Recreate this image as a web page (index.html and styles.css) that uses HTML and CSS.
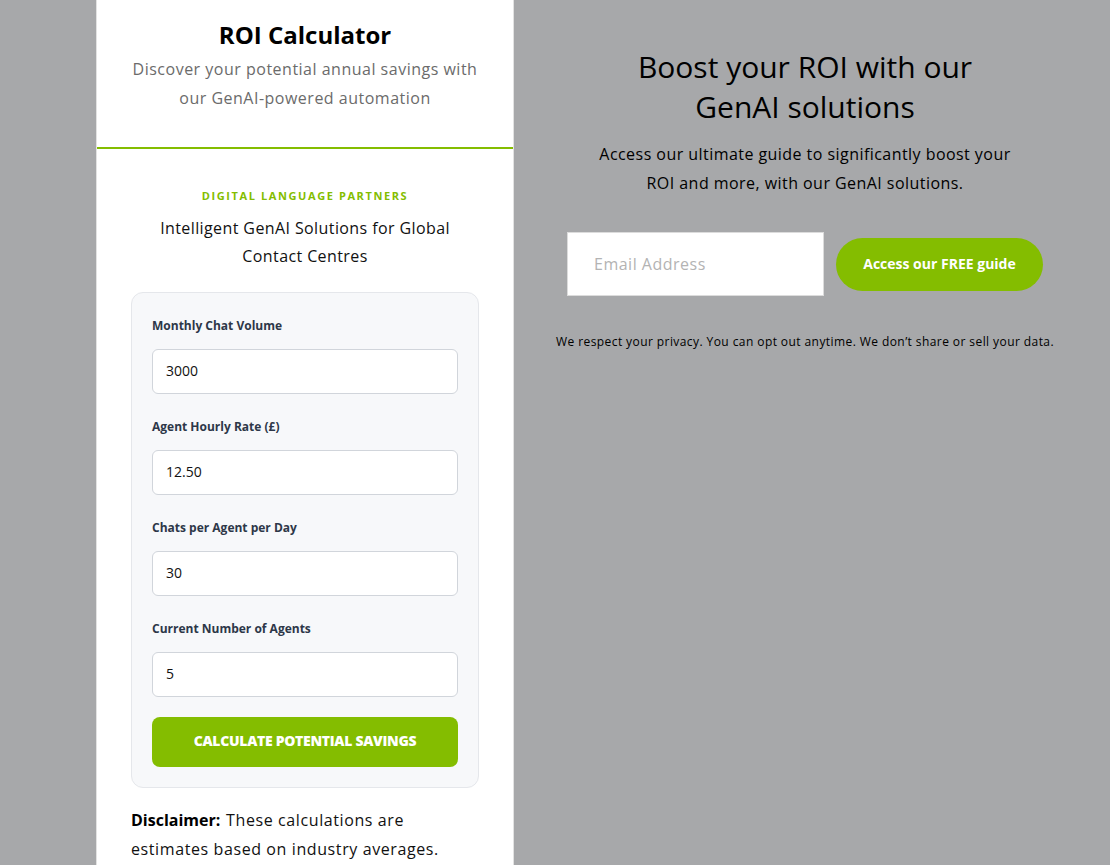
FILE: index.html
```html
<!DOCTYPE html>
<html lang="en">
<head>
<meta charset="utf-8">
<title>ROI Calculator</title>
<link rel="stylesheet" href="styles.css">
</head>
<body>
<div class="page">
  <section class="panel">
    <header class="panel-head">
      <h1 class="title">ROI Calculator</h1>
      <p class="subtitle">Discover your potential annual savings with our GenAI-powered automation</p>
    </header>
    <div class="panel-body">
      <div class="brand">DIGITAL LANGUAGE PARTNERS</div>
      <p class="tagline">Intelligent GenAI Solutions for Global Contact Centres</p>
      <form class="card">
        <div class="field">
          <label class="label">Monthly Chat Volume</label>
          <input class="input" type="text" value="3000">
        </div>
        <div class="field">
          <label class="label">Agent Hourly Rate (£)</label>
          <input class="input" type="text" value="12.50">
        </div>
        <div class="field">
          <label class="label">Chats per Agent per Day</label>
          <input class="input" type="text" value="30">
        </div>
        <div class="field last">
          <label class="label">Current Number of Agents</label>
          <input class="input" type="text" value="5">
        </div>
        <button class="calc-btn" type="button">CALCULATE POTENTIAL SAVINGS</button>
      </form>
      <p class="disclaimer"><strong class="disc-label">Disclaimer:</strong> These calculations are estimates based on industry averages.</p>
    </div>
  </section>
  <section class="promo">
    <h2 class="promo-title">Boost your ROI with our GenAI solutions</h2>
    <p class="promo-text">Access our ultimate guide to significantly boost your ROI and more, with our GenAI solutions.</p>
    <div class="signup">
      <input class="email" type="text" placeholder="Email Address">
      <button class="guide-btn" type="button">Access our FREE guide</button>
    </div>
    <p class="privacy">We respect your privacy. You can opt out anytime. We don’t share or sell your data.</p>
  </section>
</div>
</body>
</html>
```

FILE: styles.css
```css
* { box-sizing: border-box; }
html, body { margin: 0; padding: 0; }
body {
  background: #a7a8aa;
  font-family: "Open Sans", "DejaVu Sans", sans-serif;
  color: #000;
  height: 865px;
  overflow: hidden;
}
.page {
  display: flex;
  align-items: flex-start;
  padding-left: 96px;
}
.panel {
  width: 418px;
  background: #fff;
  border-left: 1px solid #e2e2e2;
  border-right: 1px solid #e2e2e2;
  min-height: 865px;
  flex-shrink: 0;
}
.panel-head {
  padding: 19px 28px 34px;
  text-align: center;
  border-bottom: 2px solid #84bd00;
}
.title {
  margin: 0 0 4px;
  font-size: 24px;
  line-height: 32px;
  font-weight: 700;
}
.subtitle {
  margin: 0;
  font-size: 16px;
  line-height: 29px;
  letter-spacing: 0.5px;
  color: #6b6b6b;
}
.panel-body {
  padding: 39px 34px 0;
}
.brand {
  text-align: center;
  color: #84bd00;
  font-size: 11px;
  line-height: 16px;
  font-weight: 700;
  letter-spacing: 1.6px;
}
.tagline {
  margin: 10px 0 22px;
  padding: 0 12px;
  text-align: center;
  font-size: 16px;
  line-height: 28px;
  letter-spacing: 0.4px;
  color: #111;
}
.card {
  background: #f7f8fa;
  border: 1px solid #e5e7eb;
  border-radius: 12px;
  padding: 24px 20px 20px;
  margin: 0;
}
.field {
  display: flex;
  flex-direction: column;
  margin-bottom: 24px;
}
.field.last { margin-bottom: 20px; }
.label {
  font-size: 12px;
  line-height: 18px;
  font-weight: 700;
  color: #2d3748;
  margin-bottom: 14px;
}
.input {
  height: 45px;
  border: 1px solid #d1d5db;
  border-radius: 6px;
  background: #fff;
  padding: 0 13px 2px;
  font-family: inherit;
  font-size: 14px;
  color: #111;
}
.calc-btn {
  display: block;
  width: 100%;
  height: 50px;
  border: 0;
  border-radius: 8px;
  background: #84bd00;
  color: #fff;
  font-family: inherit;
  font-size: 14px;
  font-weight: 800;
  letter-spacing: -0.3px;
  padding: 0 0 3px;
}
.disclaimer {
  margin: 18px 0 0;
  padding-right: 18px;
  font-size: 16px;
  line-height: 29px;
  letter-spacing: 0.6px;
  color: #111;
}
.disc-label { color: #000; letter-spacing: 0; margin-right: 1px; }
.promo {
  flex: 1;
  display: flex;
  flex-direction: column;
  align-items: center;
  padding-top: 47px;
  padding-right: 14px;
}
.promo-title {
  margin: 0;
  max-width: 400px;
  text-align: center;
  font-size: 30px;
  line-height: 40px;
  font-weight: 500;
  color: #000;
}
.promo-text {
  margin: 13px 0 0;
  max-width: 440px;
  text-align: center;
  font-size: 16px;
  line-height: 29px;
  letter-spacing: 0.45px;
  color: #000;
}
.signup {
  display: flex;
  align-items: center;
  gap: 12px;
  margin-top: 34px;
}
.email {
  width: 257px;
  height: 64px;
  border: 1px solid #dcdcdc;
  background: #fff;
  padding: 0 26px;
  font-family: inherit;
  font-size: 16px;
  letter-spacing: 0.5px;
}
.email::placeholder { color: #b3b3b3; }
.guide-btn {
  width: 207px;
  height: 53px;
  border: 0;
  border-radius: 27px;
  background: #84bd00;
  color: #fff;
  font-family: inherit;
  font-size: 14px;
  font-weight: 700;
  padding: 0 0 2px;
}
.privacy {
  margin: 37px 0 0;
  font-size: 12px;
  line-height: 18px;
  letter-spacing: 0.42px;
  color: #000;
  text-align: center;
}
```
